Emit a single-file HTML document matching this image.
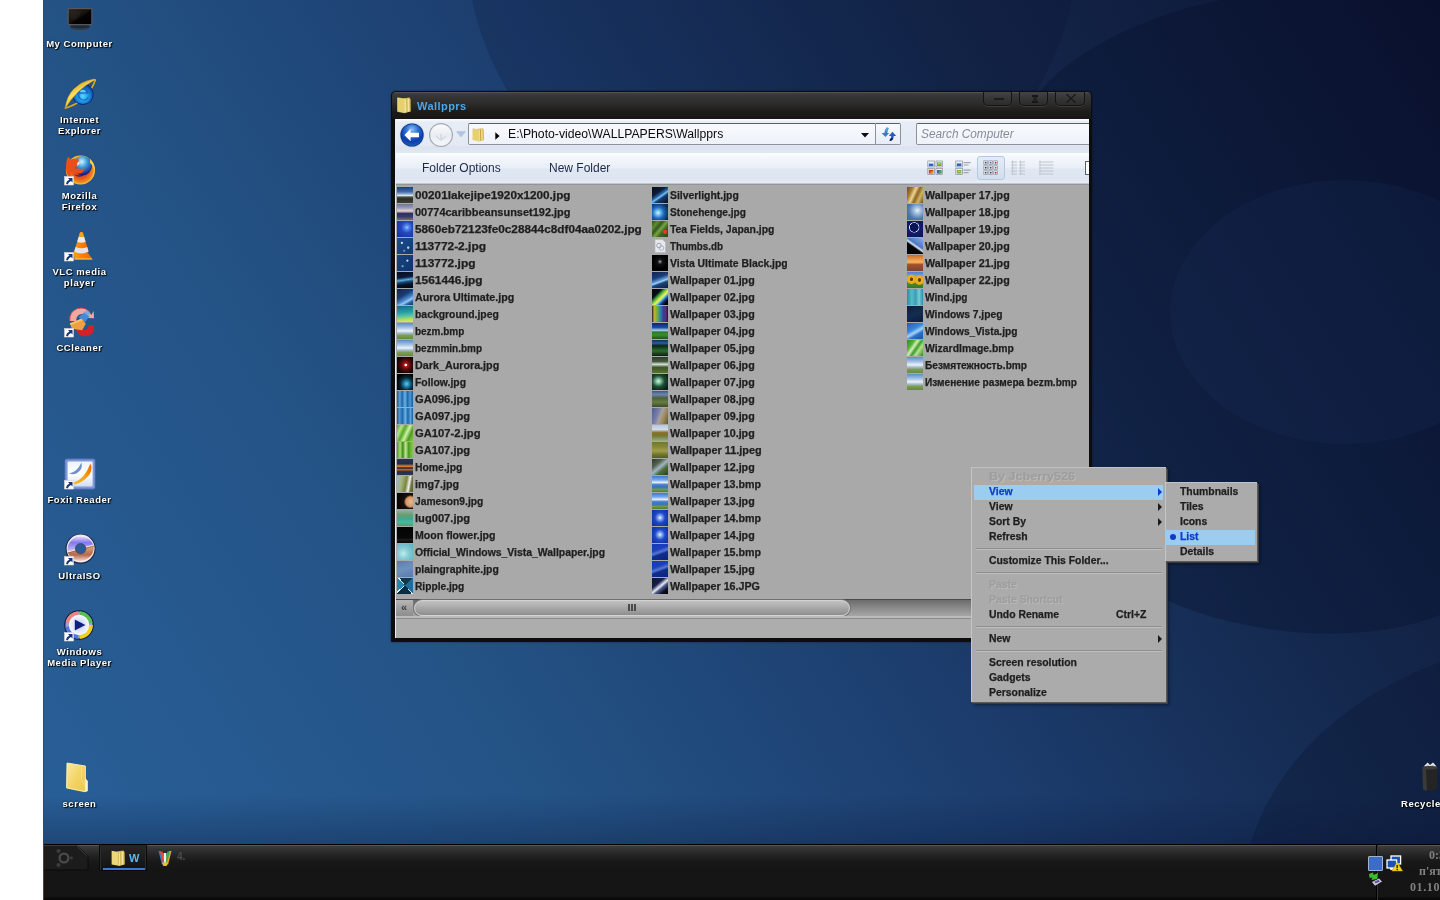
<!DOCTYPE html>
<html>
<head>
<meta charset="utf-8">
<title>Desktop</title>
<style>
html,body{margin:0;padding:0;}
body{width:1440px;height:900px;overflow:hidden;background:#fff;position:relative;font-family:"Liberation Sans",sans-serif;font-size:11px;font-weight:bold;}
#desk{will-change:transform;position:absolute;left:0;top:0;width:1440px;height:845px;overflow:hidden;background:#26598d;}
#white{position:absolute;left:0;top:0;width:43px;height:900px;background:#fff;z-index:50;}
#desk svg.wp{position:absolute;left:0;top:0;}
#edge{z-index:51;position:absolute;left:43px;top:0;width:1px;height:900px;background:#2a4a72;}
/* desktop icons */
.di{position:absolute;width:91px;height:70px;text-align:center;color:#fff;font-size:9.5px;line-height:11px;letter-spacing:.55px;font-weight:bold;text-shadow:1px 1px 1px #000,0 0 2px rgba(0,0,0,.8);}
.di .ic{position:absolute;left:30px;top:0;width:32px;height:32px;}
.di .lb{position:absolute;left:0;width:91px;top:36px;white-space:nowrap;}
.sc{position:absolute;left:-1px;top:19px;width:9px;height:9px;background:#fff;border:1px solid #9aa;box-sizing:border-box;}
.sc:after{content:"";position:absolute;left:2px;top:1px;width:4px;height:4px;background:#1d4fa8;}
/* window */
#win{position:absolute;left:391px;top:91px;width:701px;height:551px;border-radius:5px 5px 1px 1px;background:#0d0d0d;box-shadow:0 0 2px rgba(5,10,30,.6);}
#tbar{position:absolute;left:1px;top:1px;right:1px;height:27px;border-radius:4px 4px 0 0;background:linear-gradient(#626262 0,#404040 1px,#383838 3px,#2b2b2b 12px,#1d1b1a 20px,#181615 100%);}
#ttl{position:absolute;left:26px;top:9px;color:#4ca6ec;font-size:11px;line-height:13px;font-weight:bold;letter-spacing:.45px;}
.wb{position:absolute;top:1px;height:14px;border:1px solid #141414;border-top:none;border-radius:0 0 5px 5px;box-sizing:border-box;background:linear-gradient(#444 0,#363636 50%,#2c2c2c 100%);box-shadow:0 1px 0 #3c3c3c;}
.wb i{position:absolute;background:#171717;}
#client{position:absolute;left:4px;top:28px;width:694px;height:519px;background:#a9a9a9;overflow:hidden;border-left:1px solid #e8ecf0;box-sizing:border-box;}
#nav{position:absolute;left:0;top:0;width:694px;height:34px;background:linear-gradient(#fdfdfe 0,#e6edf6 3px,#e3eaf4 26px,#dbe3ee 28px,#e0e8f2 100%);}
#addr{position:absolute;left:72px;top:4px;width:408px;height:22px;box-sizing:border-box;border:1px solid #8c929c;border-top-color:#5c6068;border-radius:2px 0 0 2px;background:linear-gradient(#f8fafd,#eef2f9);}
#path{transform:scaleX(1.017);position:absolute;left:39px;top:3px;font-size:12px;line-height:15px;font-weight:normal;color:#0a0a0a;white-space:nowrap;transform-origin:0 50%;display:inline-block;}
#refr{position:absolute;left:480px;top:4px;width:25px;height:22px;box-sizing:border-box;border:1px solid #8c929c;border-top-color:#5c6068;border-left:none;border-radius:0 2px 2px 0;background:linear-gradient(#f8fafd,#e6ecf6);}
#srch{position:absolute;left:520px;top:4px;width:190px;height:22px;box-sizing:border-box;border:1px solid #8c929c;border-top-color:#5c6068;border-radius:2px;background:linear-gradient(#f8fafd,#eef2f9);}
#srch span{transform:scaleX(.985);position:absolute;left:4px;top:3px;font-size:12px;line-height:15px;font-style:italic;font-weight:normal;color:#868c96;white-space:nowrap;transform-origin:0 50%;display:inline-block;}
#tool{position:absolute;left:0;top:34px;width:694px;height:32px;background:linear-gradient(#fbfcfe 0,#f2f6fb 6px,#e9eff7 15px,#dfe7f2 16px,#dde6f1 26px,#e6edf6 30px,#9aa0a8 31px,#888 100%);}
#tool span{position:absolute;top:8px;font-size:12px;line-height:15px;font-weight:normal;color:#1c2846;white-space:nowrap;}
#tool>svg,#tool>div{margin-top:-1px;}
#list{position:absolute;left:0;top:66px;width:694px;height:415px;background:#a9a9a9;}
.th{position:absolute;width:16px;height:16px;margin-left:-396px;margin-top:-185px;}
.fn{-webkit-text-stroke:.25px #222;position:absolute;margin-left:-396px;margin-top:-185px;height:16px;line-height:17px;font-size:10px;font-weight:bold;color:#1e1e1e;white-space:nowrap;transform-origin:0 50%;display:inline-block;}
#hs{position:absolute;left:0;top:480px;width:694px;height:17px;background:linear-gradient(#4a4a4a 0,#4a4a4a 1px,#6c6c6c 1px,#8a8a8a 9px,#a6a6a6 17px);}
#hs:before{content:'';position:absolute;left:0;top:1px;width:17px;height:16px;background:linear-gradient(#b6b6b6,#9c9c9c 60%,#8e8e8e);}
#thumb{position:absolute;left:18px;top:1px;width:436px;height:16px;box-sizing:border-box;border:1px solid #d2d2d2;border-radius:8px;background:linear-gradient(#c2c2c2 0,#aaa 45%,#8e8e8e 100%);box-shadow:0 0 0 1px #6e6e6e;}
#thumb i{position:absolute;left:213px;top:3px;width:8px;height:7px;background:linear-gradient(90deg,#4a4a4a 0,#4a4a4a 2px,transparent 2px,transparent 3px,#4a4a4a 3px,#4a4a4a 5px,transparent 5px,transparent 6px,#4a4a4a 6px);}
#stat{position:absolute;left:0;top:497px;width:694px;height:22px;background:linear-gradient(#bcbcbc 0,#bababa 2px,#8c8c8c 2px,#8c8c8c 3px,#adadad 3px,#adadad 100%);}
/* menus */
#cm{position:absolute;left:971px;top:467px;width:195px;height:235px;background:#ababab;border-left:1px solid #c6c6c6;border-top:1px solid #c2c2c2;box-sizing:border-box;box-shadow:1px 1px 0 #5a5a5a,2px 2px 0 #3c3c3c,3px 3px 3px rgba(0,0,0,.45);}
#sm{position:absolute;left:1165px;top:482px;width:92px;height:79px;background:#ababab;border-left:1px solid #c6c6c6;border-top:1px solid #c2c2c2;box-sizing:border-box;box-shadow:1px 1px 0 #5a5a5a,2px 2px 0 #3c3c3c,3px 3px 3px rgba(0,0,0,.45);}
.mi{position:absolute;left:2px;right:3px;height:15px;margin-top:-1px;}
.mi span{-webkit-text-stroke:.25px currentColor;position:absolute;left:15px;top:0;font-size:10px;line-height:16px;font-weight:bold;color:#1e1e1e;white-space:nowrap;display:inline-block;transform-origin:0 50%;}
#sm .mi span{left:15px;}
#sm .mi{left:-1px;right:2px;}
.mi span.kb{left:142px;}
.mi.hl{background:#9bcdf0;margin-top:0;}
.mi.hl span{top:-1px;}
.mi.hl b{top:3px;}
.mi.hl u{top:4px;}
.mi.hl span{color:#0b3ccc;}
.mi.dis span{color:#9e9e9e;text-shadow:1px 1px 0 #bcbcbc;}
.mi b{position:absolute;right:1px;top:4px;width:0;height:0;border-left:4px solid #1a1a1a;border-top:4px solid transparent;border-bottom:4px solid transparent;}
.mi.hl b{border-left-color:#0b3ccc;}
.mi u{position:absolute;left:5px;top:5px;width:6px;height:6px;border-radius:3px;background:#0b3ccc;}
.sep{position:absolute;left:4px;right:4px;height:2px;margin-top:-1px;background:linear-gradient(#8e8e8e 0,#8e8e8e 1px,#bdbdbd 1px);}
/* taskbar */
#tb{will-change:transform;position:absolute;left:43px;top:844px;width:1397px;height:56px;overflow:hidden;background:linear-gradient(#000 0,#000 1px,#6e6e6e 1px,#3d3b3b 2px,#343333 5px,#222 12px,#181818 18px,#151515 26px,#141414 53px,#090909 54px,#090909 100%);}
#start{position:absolute;left:0;top:1px;width:46px;height:26px;}
#t1{position:absolute;left:56px;top:1px;width:48px;height:26px;box-sizing:border-box;border:1px solid #090909;border-top:none;background:linear-gradient(#262626,#121212);box-shadow:inset 1px 0 0 #2c2c2c,inset -1px 0 0 #2c2c2c;}
#t1 span{position:absolute;left:29px;top:7px;font-size:11px;line-height:13px;color:#58b8f8;font-weight:bold;}
#t1 i{position:absolute;left:3px;top:23px;width:42px;height:2px;background:#3a78d8;}
#t2{position:absolute;left:134px;top:7px;font-size:10px;line-height:12px;color:#4c4c4c;font-weight:bold;}
#tsep{position:absolute;left:1333px;top:1px;width:2px;height:55px;background:linear-gradient(90deg,#000 0,#000 1px,#343434 1px);}
#clk span{position:absolute;font-family:"Liberation Serif",serif;font-weight:bold;font-size:12px;line-height:14px;color:#808080;white-space:nowrap;}
</style>
</head>
<body>
<div id="desk">
<svg class="wp" width="1440" height="845" viewBox="0 0 1440 845">
<defs>
<linearGradient id="wg" gradientUnits="userSpaceOnUse" x1="100" y1="845" x2="1440" y2="0">
<stop offset="0" stop-color="#285e96"/>
<stop offset="0.25" stop-color="#245386"/>
<stop offset="0.5" stop-color="#1c3d6e"/>
<stop offset="0.72" stop-color="#14284d"/>
<stop offset="1" stop-color="#0b1230"/>
</linearGradient>
<linearGradient id="vg" x1="0" y1="0" x2="0" y2="1"><stop offset="0" stop-color="#061030" stop-opacity="0"/><stop offset="1" stop-color="#061030" stop-opacity="0.3"/></linearGradient>
</defs>
<rect width="1440" height="845" fill="url(#wg)"/>
<rect y="795" width="1440" height="50" fill="url(#vg)"/>
<circle cx="772" cy="-65" r="307" fill="#08102c" opacity="0.2"/>
<path d="M1222 0 C1120 20 1050 70 1035 100 C960 250 1000 520 1167 600 C1230 630 1350 650 1440 615 L1440 0 Z" fill="#070d28" opacity="0.3"/>
<ellipse cx="1345" cy="312" rx="175" ry="132" fill="#22407a" opacity="0.12"/>
<path d="M1250 845 Q1290 720 1440 662 L1440 845 Z" fill="#0a1330" opacity="0.3"/>
</svg>
<svg width="0" height="0" style="position:absolute">
<defs>
<radialGradient id="ieg" cx="0.5" cy="0.6" r="0.6"><stop offset="0" stop-color="#5fd8ff"/><stop offset="0.45" stop-color="#1c9be6"/><stop offset="1" stop-color="#0d3a9c"/></radialGradient>
<linearGradient id="iey" x1="0" y1="1" x2="1" y2="0"><stop offset="0" stop-color="#e8b820"/><stop offset="0.5" stop-color="#ffe060"/><stop offset="1" stop-color="#c89a18"/></linearGradient>
<radialGradient id="ffg" cx="0.45" cy="0.3" r="0.7"><stop offset="0" stop-color="#d8f4ff"/><stop offset="0.4" stop-color="#3aa0e0"/><stop offset="1" stop-color="#141a78"/></radialGradient>
<radialGradient id="ffo" cx="0.5" cy="0.5" r="0.5"><stop offset="0.55" stop-color="#e8501a"/><stop offset="0.85" stop-color="#f08a1c"/><stop offset="1" stop-color="#f8c840"/></radialGradient>
<linearGradient id="vlc" x1="0" y1="0" x2="1" y2="0"><stop offset="0" stop-color="#f8a020"/><stop offset="0.5" stop-color="#ff7a00"/><stop offset="1" stop-color="#e86a00"/></linearGradient>
<linearGradient id="fold" x1="0" y1="0" x2="1" y2="1"><stop offset="0" stop-color="#fbeaa0"/><stop offset="0.5" stop-color="#f3d568"/><stop offset="1" stop-color="#eac848"/></linearGradient>
<radialGradient id="iso" cx="0.5" cy="0.5" r="0.5"><stop offset="0" stop-color="#fff"/><stop offset="1" stop-color="#f4e8f0"/></radialGradient>
<linearGradient id="isot" x1="0" y1="0" x2="0" y2="1"><stop offset="0" stop-color="#e8d8ff"/><stop offset="0.4" stop-color="#8078f0"/><stop offset="1" stop-color="#d8c8f8"/></linearGradient>
<linearGradient id="isob" x1="0" y1="0" x2="0" y2="1"><stop offset="0" stop-color="#e0b080"/><stop offset="0.6" stop-color="#b86848"/><stop offset="1" stop-color="#f0d8d0"/></linearGradient>
<radialGradient id="wmp" cx="0.5" cy="0.5" r="0.5"><stop offset="0" stop-color="#b8c8ff"/><stop offset="0.6" stop-color="#dfe8ff"/><stop offset="1" stop-color="#f8f8ff"/></radialGradient>
<linearGradient id="fox" x1="0" y1="0" x2="0" y2="1"><stop offset="0" stop-color="#eef3fb"/><stop offset="0.5" stop-color="#ffffff"/><stop offset="1" stop-color="#d4dcf4"/></linearGradient>
<linearGradient id="foxo" x1="0" y1="1" x2="1" y2="0"><stop offset="0" stop-color="#f0c020"/><stop offset="0.5" stop-color="#f8a010"/><stop offset="1" stop-color="#f06000"/></linearGradient>
<linearGradient id="mon" x1="0" y1="0" x2="1" y2="1"><stop offset="0" stop-color="#2a241e"/><stop offset="0.5" stop-color="#15100c"/><stop offset="0.55" stop-color="#050304"/><stop offset="1" stop-color="#000"/></linearGradient>
<g id="scarrow"><rect x="0.5" y="0.5" width="9" height="8.5" fill="#fff" stroke="#d0d4dc" stroke-width="0.6"/><path d="M4 1.9 L8.5 1.9 L8.5 6.4 L7 4.9 Q4.8 5.6 3.6 8.4 L2 7.8 Q2.4 4.6 5.5 3.4Z" fill="#15347e"/></g>
</defs>
</svg>
<div class="di" style="left:34px;top:2px"><svg class="ic" viewBox="0 0 32 32"><ellipse cx="16" cy="25.3" rx="10" ry="2.6" fill="#3a3d40"/><ellipse cx="16" cy="24.3" rx="10" ry="2.2" fill="#1c2a3c"/><rect x="3.6" y="6" width="24.8" height="17.2" rx="0.8" fill="#55565a"/><rect x="4.8" y="7.2" width="22.4" height="14.8" fill="url(#mon)"/><path d="M7 10h10M7 12h9M7 14h7M7 16h5" stroke="#3a3530" stroke-width="0.5"/></svg><div class="lb">My Computer</div></div>
<div class="di" style="left:34px;top:78px"><svg class="ic" viewBox="0 0 32 32"><g transform="translate(16.2 15.9) rotate(-43)"><path d="M-21 0 Q0 11 21 0" fill="none" stroke="#d8a818" stroke-width="1.6"/></g><circle cx="18.9" cy="16.2" r="10.7" fill="#0c2a7c"/><circle cx="18.9" cy="16.2" r="9.9" fill="url(#ieg)"/><path d="M13.4 17 A5.7 5.7 0 1 1 24.6 15.8 L15.8 15.8 A3.4 3.4 0 0 0 23.6 18.8 L24.6 20 A6.2 6.2 0 0 1 13.4 17Z" fill="#1458c0" opacity="0.7"/><path d="M15.8 14.2 L22 14.2 A3.2 3.2 0 0 0 15.8 14.2Z" fill="#58d0f8"/><g transform="translate(16.2 15.9) rotate(-43)"><path d="M-21.5 0.6 Q-2 -15.5 20 -1.6 Q22.6 0.4 20.4 2.4 Q21 0 17.6 -0.8 Q0 -5.6 -21.5 0.6Z" fill="url(#iey)" stroke="#b88810" stroke-width="0.4"/></g></svg><div class="lb">Internet<br>Explorer</div></div>
<div class="di" style="left:34px;top:154px"><svg class="ic" viewBox="0 0 32 32"><circle cx="16.5" cy="16" r="14.6" fill="url(#ffo)"/><circle cx="18.6" cy="11.6" r="9.6" fill="url(#ffg)"/><path d="M2.6 6.5 L4.2 2.8 L7 5.4 Q10 3.8 12.6 5.6 L14.4 3.6 L14.6 7.6 Q12.2 9.4 13.4 12 Q11 12.6 10.8 14.6 Q14 13.6 16.4 15.2 Q19 15 20.4 13.4 Q21 17.6 16.2 19.4 Q11 20.4 8.4 16.8 Q5 21 8 26 Q2 22 2 14 Q2 9.5 2.6 6.5Z" fill="#e8501a"/><path d="M14.4 7.8 Q12.4 9.4 13.4 12 Q15 10.6 15.8 9 Z" fill="#f8e8c8"/><path d="M26 5 Q31 10 30.5 17 Q29 11 26 9Z" fill="#f8d048"/><path d="M10 20 Q16 23 22 19 Q20 22.5 15 22.8 Q11.5 22.5 10 20Z" fill="#1a1c70" opacity="0.8"/></svg><svg style="position:absolute;left:30px;top:22px;width:10px;height:10px" viewBox="0 0 10 10"><use href="#scarrow"/></svg><div class="lb">Mozilla<br>Firefox</div></div>
<div class="di" style="left:34px;top:230px"><svg class="ic" viewBox="0 0 32 32"><path d="M9.6 21.5 L23 21.5 L28.6 29.6 L10.6 29.6Z" fill="url(#vlc)"/><path d="M10.6 28.2 L27.6 28.2 L28.6 29.6 L10.6 29.6Z" fill="#ffb840"/><path d="M16 2.6 Q17.4 1.4 18.8 2.6 L24.6 21.6 Q17.4 25.4 10.2 21.6Z" fill="url(#vlc)"/><path d="M14.7 6.8 L20.1 6.8 L21.6 11.8 Q17.4 13.6 13.2 11.8Z" fill="#eceaf0"/><path d="M11.6 17 Q17.4 19.6 23.2 17 L24.6 21.6 Q17.4 25.4 10.2 21.6Z" fill="#e4e2ea"/><path d="M16 2.6 Q17.4 1.4 18.8 2.6 L20 6.4 L14.8 6.4Z" fill="#e8a828"/></svg><svg style="position:absolute;left:30px;top:22px;width:10px;height:10px" viewBox="0 0 10 10"><use href="#scarrow"/></svg><div class="lb">VLC media<br>player</div></div>
<div class="di" style="left:34px;top:306px"><svg class="ic" viewBox="1.2 1.2 29.6 29.6"><path d="M26.6 9.4 Q22 1.2 13.6 3.6 Q5.8 6.4 6.6 15 L12.4 15 Q12.4 9.4 17.4 8.6 Q20.4 8.4 21.6 10.6 L20.2 12 L29 12.6 L28.6 5.8Z" fill="#f0a8a0"/><path d="M26.6 9.4 Q22 1.2 13.6 3.6 Q5.8 6.4 6.6 15" fill="none" stroke="#d04038" stroke-width="0.8"/><path d="M12 22 Q15 31.6 24.4 28.6 Q29.6 26.2 29 19.4 L24 18.6 Q23.6 23.6 19.4 23.4 Q17 23.4 15.6 21.4Z" fill="#d42028"/><path d="M14.6 11.6 L20.6 6.6 L24.6 11 L20.4 16.4Z" fill="#4888d8"/><path d="M19.6 7.4 L22.4 4.8 L25.4 7.6 L23.6 10.2Z" fill="#78a8e8"/><path d="M6.6 17.2 L17.4 13 L21.4 17.6 L18 23.6 L8.4 22.2Z" fill="#f0a040"/><path d="M6.6 17.2 L17.4 13 L18.6 14.4 L7.4 19Z" fill="#f8c060"/></svg><svg style="position:absolute;left:30px;top:22px;width:10px;height:10px" viewBox="0 0 10 10"><use href="#scarrow"/></svg><div class="lb">CCleaner</div></div>
<div class="di" style="left:34px;top:458px"><svg class="ic" viewBox="0 0 32 32"><rect x="0.6" y="0.6" width="30.8" height="30.8" rx="2.2" fill="#5674b8"/><rect x="1.4" y="1.4" width="29.2" height="29.2" rx="1.8" fill="#7f98d8"/><rect x="3.6" y="3.4" width="25" height="25.2" rx="1" fill="url(#fox)"/><path d="M5.2 15.4 Q13 14.6 17.4 4.6 Q19.4 11.6 12.4 15.4 Q8.6 17 5.2 15.4Z" fill="#7090cc"/><path d="M9.6 24.6 Q21 21 26.4 5.6 Q30.4 13.6 21.4 21 Q15.4 25.6 10.4 26.4Z" fill="url(#foxo)"/></svg><svg style="position:absolute;left:30px;top:22px;width:10px;height:10px" viewBox="0 0 10 10"><use href="#scarrow"/></svg><div class="lb">Foxit Reader</div></div>
<div class="di" style="left:34px;top:534px"><svg class="ic" viewBox="0 0 32 32"><circle cx="16.6" cy="14.8" r="15" fill="#141c38" opacity="0.85"/><circle cx="16.6" cy="14.6" r="14" fill="url(#iso)"/><path d="M3.6 18 A13.4 13.4 0 0 1 29.4 11.2 L16.6 14.6Z" fill="url(#isot)"/><path d="M29.6 11.4 A13.4 13.4 0 0 1 3.8 18.2 L16.6 14.6Z" fill="url(#isob)"/><path d="M3.4 18.2 L29.8 11.2" stroke="#f8ecd8" stroke-width="1.2"/><path d="M3.6 19 L29.9 12" stroke="#8a6040" stroke-width="0.8"/><circle cx="16.6" cy="14.6" r="5.6" fill="#40507a"/><circle cx="16.6" cy="14.6" r="4.2" fill="#2a5c98"/></svg><svg style="position:absolute;left:30px;top:22px;width:10px;height:10px" viewBox="0 0 10 10"><use href="#scarrow"/></svg><div class="lb">UltraISO</div></div>
<div class="di" style="left:34px;top:610px"><svg class="ic" viewBox="0 0 32 32"><circle cx="15" cy="15" r="14.8" fill="#101c48"/><circle cx="15" cy="15" r="13.6" fill="#98a4d0"/><path d="M15 15 L1.6 12 A13.8 13.8 0 0 1 14 1.2Z" fill="#f08078"/><path d="M15 15 L16 1.2 A13.8 13.8 0 0 1 28.6 13Z" fill="#58c050"/><path d="M15 15 L28.8 15 A13.8 13.8 0 0 1 16 28.8Z" fill="#f0d020"/><path d="M15 15 L14 28.8 A13.8 13.8 0 0 1 1.4 17Z" fill="#5078e0"/><circle cx="15" cy="15" r="10.2" fill="url(#wmp)"/><path d="M10.8 9.6 L21.4 15 L10.8 20.4Z" fill="#10207c"/></svg><svg style="position:absolute;left:30px;top:22px;width:10px;height:10px" viewBox="0 0 10 10"><use href="#scarrow"/></svg><div class="lb">Windows<br>Media Player</div></div>
<div class="di" style="left:34px;top:762px"><svg class="ic" viewBox="0 0 32 32"><path d="M3 1.4 L21 4.2 L21 16 L23.6 19 L23.6 29.2 L20.6 30.2 L2.6 26.4Z" fill="#c8a840"/><path d="M21 16 L23.8 19 L23.8 29 L20.8 30Z" fill="#f8f0c0"/><path d="M3 1 L21.4 4 L21.4 29.6 L2.6 25.8Z" fill="url(#fold)"/><path d="M3 1 L21.4 4 L21.4 29.6 L2.6 25.8Z" fill="none" stroke="#fbf0c0" stroke-width="0.9"/><path d="M17.6 5 L17.6 17 L21 24" fill="none" stroke="#f8e0a0" stroke-width="0.6"/></svg><div class="lb">screen</div></div>
<div class="di" style="left:1391px;top:762px"><svg class="ic" viewBox="0 0 32 32"><path d="M2.6 4.6 L6.6 0.6 L9 3 L12 0.4 L15.6 4.6Z" fill="#e8e8e8"/><path d="M4 4.8 L7 2.4 L9 4.4 L11.6 2.6 L14 4.8Z" fill="#b8b8b8"/><path d="M1.4 5.6 Q9 3.6 16.6 5.6 L16 27.6 Q9 30 2 27.6Z" fill="#242424"/><ellipse cx="9" cy="5.8" rx="7.6" ry="1.8" fill="#3c3c3c"/><path d="M1.4 5.6 L2 27.6 Q4 28.6 6 28.8 L5 6.6Z" fill="#3a3a3a"/></svg><div class="lb" style="text-align:left;left:10px">Recycle</div></div>

<div id="win">
 <div id="tbar"></div>
 <svg style="position:absolute;left:6px;top:6px" width="15" height="17" viewBox="0 0 15 17"><path d="M0.6 0.8 L7.6 2 L7.6 15.8 L0.6 14.4Z" fill="#e8d070"/><path d="M5.6 1.6 L12.4 0.6 L13.6 2.2 L13.8 14.6 L7.4 16 L7.4 2.4Z" fill="#d8b848"/><path d="M7.6 2.4 L12.2 1.4 L12.4 14.6 L7.6 15.8Z" fill="#f4e498"/><path d="M9.8 2 L10 15.2" stroke="#b89830" stroke-width="0.9"/><path d="M0.6 0.8 L7.6 2 L7.6 15.8 L0.6 14.4Z" fill="none" stroke="#f8eeb0" stroke-width="0.6"/></svg>
 <div id="ttl">Wallpprs</div>
 <div class="wb" style="left:592px;width:29px"><i style="left:10px;top:6px;width:10px;height:1.5px;opacity:.85"></i></div>
 <div class="wb" style="left:628px;width:29px"><i style="left:12px;top:3px;width:6px;height:2px"></i><i style="left:12px;top:9px;width:6px;height:2px"></i><i style="left:13px;top:5px;width:4px;height:4px;opacity:.6"></i></div>
 <div class="wb" style="left:664px;width:30px"><svg style="position:absolute;left:9px;top:1px" width="12" height="11" viewBox="0 0 12 11"><path d="M1.5 1.2 L10.5 9.8 M10.5 1.2 L1.5 9.8" stroke="#191919" stroke-width="1.3"/></svg></div>
 <div id="client">
  <div id="nav">
   <svg style="position:absolute;left:3px;top:3px" width="26" height="26" viewBox="0 0 26 26"><defs><radialGradient id="bk" cx="0.5" cy="0.25" r="0.8"><stop offset="0" stop-color="#8cc0f4"/><stop offset="0.35" stop-color="#2c70d8"/><stop offset="0.7" stop-color="#0c3ca8"/><stop offset="1" stop-color="#1c68d0"/></radialGradient></defs><circle cx="13" cy="13" r="12.3" fill="#c8d4e4"/><circle cx="13" cy="13" r="11.6" fill="#0c2c78"/><circle cx="13" cy="13" r="10.8" fill="url(#bk)"/><path d="M5.4 13 L11.6 6.8 L11.6 10.8 L20 10.8 L20 15.2 L11.6 15.2 L11.6 19.2Z" fill="#fff"/></svg>
   <svg style="position:absolute;left:32px;top:3px" width="26" height="26" viewBox="0 0 26 26"><defs><linearGradient id="fw" x1="0" y1="0" x2="0" y2="1"><stop offset="0" stop-color="#fafbfd"/><stop offset="0.5" stop-color="#e9edf3"/><stop offset="1" stop-color="#f4f6fa"/></linearGradient></defs><circle cx="13" cy="13" r="12" fill="#a4a8b0"/><circle cx="13" cy="13" r="10.8" fill="url(#fw)"/><path d="M8 14 L13 18 L18 14 M13 12 L13 17" stroke="#d4d8e0" stroke-width="1.6" fill="none"/></svg>
   <svg style="position:absolute;left:60px;top:12px" width="10" height="7" viewBox="0 0 10 7"><path d="M0.8 0.8 L9.2 0.8 L5 5.8Z" fill="#b4c8e0" stroke="#9cb0cc" stroke-width="0.6"/></svg>
   <div id="addr">
     <svg style="position:absolute;left:3px;top:3px" width="13" height="16" viewBox="0 0 15 17"><path d="M0.6 0.8 L7.6 2 L7.6 15.8 L0.6 14.4Z" fill="#e8d070"/><path d="M5.6 1.6 L12.4 0.6 L13.6 2.2 L13.8 14.6 L7.4 16 L7.4 2.4Z" fill="#d8b848"/><path d="M7.6 2.4 L12.2 1.4 L12.4 14.6 L7.6 15.8Z" fill="#f0dc88"/><path d="M9.8 2 L10 15.2" stroke="#b89830" stroke-width="0.9"/></svg>
     <svg style="position:absolute;left:26px;top:8px" width="5" height="8" viewBox="0 0 5 8"><path d="M0.3 0.3 L4.6 4 L0.3 7.7Z" fill="#000"/></svg>
     <span id="path">E:\Photo-video\WALLPAPERS\Wallpprs</span>
     <svg style="position:absolute;left:392px;top:9px" width="8" height="5" viewBox="0 0 8 5"><path d="M0 0 L8 0 L4 4.6Z" fill="#0a0a1a"/></svg>
   </div>
   <div id="refr"><svg style="position:absolute;left:0;top:-1px" width="25" height="22" viewBox="0 0 25 22"><path d="M10.8 4.6 L12.6 5 L11.2 10 L13.2 10 L9.4 14 L5.6 10 L8.4 10 Q8.6 6.6 10.8 4.6Z" fill="#3c78c8"/><path d="M10.8 4.6 L12.6 5 L11.6 8.4 L9.2 8.2 Q9.6 6 10.8 4.6Z" fill="#58a8c8"/><path d="M16.5 8.8 L20.2 13 L17.8 13 Q17.8 16.4 14.8 18 L13.4 17.2 Q15.4 15.6 15.2 13 L12.8 13Z" fill="#2c5cc0"/><path d="M14.8 18 L13.4 17.2 Q14.6 16.4 15 15 L17.2 15.4 Q16.4 17.2 14.8 18Z" fill="#10184c"/></svg></div>
   <div id="srch"><span>Search Computer</span></div>
  </div>
  <div id="tool">
   <span style="left:26px">Folder Options</span><span style="left:153px">New Folder</span>
   <svg style="position:absolute;left:531px;top:8px" width="17" height="16" viewBox="0 0 17 16"><g stroke="#8a8f9a" stroke-width="0.7"><rect x="0.8" y="1" width="6.6" height="6" fill="#eef2f8"/><rect x="9" y="1" width="6.6" height="6" fill="#eef2f8"/><rect x="0.8" y="8.6" width="6.6" height="6" fill="#eef2f8"/><rect x="9" y="8.6" width="6.6" height="6" fill="#eef2f8"/></g><rect x="1.8" y="3.6" width="4.6" height="2.6" fill="#2c68c0"/><rect x="10" y="2.4" width="4.6" height="3.6" fill="#6ca838"/><path d="M10.6 4.6 L12 3 L13 4.4 L14 3.4" stroke="#e8e040" stroke-width="0.8" fill="none"/><rect x="1.8" y="9.8" width="4.6" height="3.8" fill="#c8401c"/><rect x="3.6" y="11.4" width="2.4" height="2" fill="#e8a020"/><rect x="10" y="10" width="4.6" height="3.6" fill="#3c6c8c"/><rect x="12" y="10.4" width="2" height="2.8" fill="#54a048"/></svg>
<svg style="position:absolute;left:559px;top:8px" width="17" height="16" viewBox="0 0 17 16"><g stroke="#8a8f9a" stroke-width="0.7"><rect x="0.8" y="1" width="6.6" height="6" fill="#eef2f8"/><rect x="0.8" y="8.6" width="6.6" height="6" fill="#eef2f8"/></g><rect x="1.8" y="3.4" width="4.6" height="2.8" fill="#2c68c0"/><rect x="1.8" y="10" width="4.6" height="3.6" fill="#74ac3c"/><path d="M2.4 12.4 L4 10.8 L5 12.2 L6 11.2" stroke="#e8e040" stroke-width="0.8" fill="none"/><path d="M8.6 2.6 L15.6 2.6 M8.6 5 L13.6 5 M8.6 10.2 L15.6 10.2 M8.6 12.6 L13.6 12.6" stroke="#a0a6b2" stroke-width="1.2"/></svg>
<div style="position:absolute;left:581px;top:4px;width:28px;height:24px;box-sizing:border-box;border:1px solid #b4c8e0;border-radius:3px;background:linear-gradient(#e4ecf6,#d2deee)"></div>
<svg style="position:absolute;left:587px;top:8px" width="16" height="16" viewBox="0 0 16 16"><rect x="0.8" y="0.8" width="3.8" height="3.8" fill="#f4f6fa" stroke="#8a8f9a" stroke-width="0.7"/><rect x="1.9000000000000001" y="1.9000000000000001" width="1.6" height="1.6" fill="#445"/><rect x="5.8" y="0.8" width="3.8" height="3.8" fill="#f4f6fa" stroke="#8a8f9a" stroke-width="0.7"/><rect x="6.9" y="1.9000000000000001" width="1.6" height="1.6" fill="#2c68c0"/><rect x="10.8" y="0.8" width="3.8" height="3.8" fill="#f4f6fa" stroke="#8a8f9a" stroke-width="0.7"/><rect x="11.9" y="1.9000000000000001" width="1.6" height="1.6" fill="#b01c28"/><rect x="0.8" y="5.8" width="3.8" height="3.8" fill="#f4f6fa" stroke="#8a8f9a" stroke-width="0.7"/><rect x="1.9000000000000001" y="6.9" width="1.6" height="1.6" fill="#2c3c5c"/><rect x="5.8" y="5.8" width="3.8" height="3.8" fill="#f4f6fa" stroke="#8a8f9a" stroke-width="0.7"/><rect x="6.9" y="6.9" width="1.6" height="1.6" fill="#445"/><rect x="10.8" y="5.8" width="3.8" height="3.8" fill="#f4f6fa" stroke="#8a8f9a" stroke-width="0.7"/><rect x="11.9" y="6.9" width="1.6" height="1.6" fill="#6a7080"/><rect x="0.8" y="10.8" width="3.8" height="3.8" fill="#f4f6fa" stroke="#8a8f9a" stroke-width="0.7"/><rect x="1.9000000000000001" y="11.9" width="1.6" height="1.6" fill="#3c4454"/><rect x="5.8" y="10.8" width="3.8" height="3.8" fill="#f4f6fa" stroke="#8a8f9a" stroke-width="0.7"/><rect x="6.9" y="11.9" width="1.6" height="1.6" fill="#2c3c6c"/><rect x="10.8" y="10.8" width="3.8" height="3.8" fill="#f4f6fa" stroke="#8a8f9a" stroke-width="0.7"/><rect x="11.9" y="11.9" width="1.6" height="1.6" fill="#a8202c"/></svg>
<svg style="position:absolute;left:614px;top:8px" width="17" height="16" viewBox="0 0 17 16"><path d="M2.6 0.6 L2.6 15 M10.6 0.6 L10.6 15" stroke="#c4c8d0" stroke-width="1"/><path d="M1 2 L7 2 M1 5 L7 5 M1 8 L7 8 M1 11 L7 11 M1 14 L7 14 M9 2 L15 2 M9 5 L15 5 M9 8 L15 8 M9 11 L15 11 M9 14 L15 14" stroke="#c0c4cc" stroke-width="1"/></svg>
<svg style="position:absolute;left:642px;top:8px" width="17" height="16" viewBox="0 0 17 16"><path d="M2 0.6 L2 15" stroke="#c4c8d0" stroke-width="1"/><path d="M1 2 L15.4 2 M1 5 L15.4 5 M1 8 L15.4 8 M1 11 L15.4 11 M1 14 L15.4 14" stroke="#c0c4cc" stroke-width="1"/></svg>
<div style="position:absolute;left:689px;top:9px;width:10px;height:14px;box-sizing:border-box;border:1px solid #5a5e68;background:#fff"></div>
  </div>
  <div id="list">
<div class="th" style="left:397px;top:187px;background:linear-gradient(#1c3f7c 0,#3c6cac 30%,#a8c4dc 48%,#e4ecf0 54%,#4c5444 62%,#2a2e24 75%,#3c4034 100%)"></div>
<span class="fn" style="left:415px;top:187px;transform:scaleX(1.175)">00201lakejipe1920x1200.jpg</span>
<div class="th" style="left:397px;top:204px;background:linear-gradient(#6c7498 0,#9c9cb8 25%,#dcd0d0 42%,#b8a4a8 50%,#2c3060 58%,#343c70 80%,#806c74 100%)"></div>
<span class="fn" style="left:415px;top:204px;transform:scaleX(1.097)">00774caribbeansunset192.jpg</span>
<div class="th" style="left:397px;top:221px;background:radial-gradient(circle at 62% 40%,#a8c8ff 0,#5c88ec 14%,#2448c0 40%,#142c98 100%)"></div>
<span class="fn" style="left:415px;top:221px;transform:scaleX(1.179)">5860eb72123fe0c28844c8df04aa0202.jpg</span>
<div class="th" style="left:397px;top:238px;background:radial-gradient(circle at 30% 30%,#c8dcf0 0,#c8dcf0 5%,transparent 9%),radial-gradient(circle at 70% 60%,#a8c8e8 0,#a8c8e8 6%,transparent 11%),radial-gradient(circle at 45% 80%,#88b0dc 0,transparent 10%),linear-gradient(135deg,#1c4c8c,#123a74)"></div>
<span class="fn" style="left:415px;top:238px;transform:scaleX(1.193)">113772-2.jpg</span>
<div class="th" style="left:397px;top:255px;background:radial-gradient(circle at 65% 35%,#b8d0ec 0,#b8d0ec 5%,transparent 10%),radial-gradient(circle at 35% 70%,#98bce0 0,transparent 11%),linear-gradient(135deg,#18447f,#10346c)"></div>
<span class="fn" style="left:415px;top:255px;transform:scaleX(1.196)">113772.jpg</span>
<div class="th" style="left:397px;top:272px;background:linear-gradient(172deg,#060e20 0,#0c1c3c 35%,#58b0e0 50%,#1c4c7c 60%,#081428 75%,#04080f 100%)"></div>
<span class="fn" style="left:415px;top:272px;transform:scaleX(1.190)">1561446.jpg</span>
<div class="th" style="left:397px;top:289px;background:linear-gradient(150deg,#102448 0,#1c3c78 40%,#4c8cd0 62%,#9cc8f0 72%,#2c5ca0 84%,#183468 100%)"></div>
<span class="fn" style="left:415px;top:289px;transform:scaleX(1.070)">Aurora Ultimate.jpg</span>
<div class="th" style="left:397px;top:306px;background:linear-gradient(175deg,#146c88 0,#24a0a8 40%,#58c4a0 62%,#b8dc60 82%,#e8e070 100%)"></div>
<span class="fn" style="left:415px;top:306px;transform:scaleX(1.040)">background.jpeg</span>
<div class="th" style="left:397px;top:323px;background:linear-gradient(#5c8cc8 0,#a8c4e4 30%,#eef2f6 50%,#a8c0d8 62%,#7c9c54 78%,#688840 100%)"></div>
<span class="fn" style="left:415px;top:323px;transform:scaleX(0.996)">bezm.bmp</span>
<div class="th" style="left:397px;top:340px;background:linear-gradient(#5c8cc8 0,#a8c4e4 30%,#eef2f6 50%,#a8c0d8 62%,#7c9c54 78%,#688840 100%)"></div>
<span class="fn" style="left:415px;top:340px;transform:scaleX(0.997)">bezmmin.bmp</span>
<div class="th" style="left:397px;top:357px;background:radial-gradient(circle at 55% 50%,#fff 0,#fff 8%,#c01818 14%,#600c0c 35%,#1a0404 70%,#000 100%)"></div>
<span class="fn" style="left:415px;top:357px;transform:scaleX(1.075)">Dark_Aurora.jpg</span>
<div class="th" style="left:397px;top:374px;background:radial-gradient(ellipse at 60% 62%,#58d0f0 0,#1c7ca8 22%,#082838 45%,#000 75%)"></div>
<span class="fn" style="left:415px;top:374px;transform:scaleX(1.040)">Follow.jpg</span>
<div class="th" style="left:397px;top:391px;background:linear-gradient(90deg,#1c5c9c 0,#5aa4dc 18%,#1c64a8 32%,#6cb4e4 50%,#2068ac 66%,#4c98d4 82%,#1a5898 100%)"></div>
<span class="fn" style="left:415px;top:391px;transform:scaleX(1.114)">GA096.jpg</span>
<div class="th" style="left:397px;top:408px;background:linear-gradient(90deg,#1a5898 0,#4c98d4 16%,#2068ac 34%,#6cb4e4 52%,#1c64a8 68%,#5aa4dc 84%,#1c5c9c 100%)"></div>
<span class="fn" style="left:415px;top:408px;transform:scaleX(1.114)">GA097.jpg</span>
<div class="th" style="left:397px;top:425px;background:linear-gradient(115deg,#4c9c20 0,#b4e484 22%,#58a828 40%,#d0f0a8 58%,#4c9c20 76%,#88cc50 100%)"></div>
<span class="fn" style="left:415px;top:425px;transform:scaleX(1.123)">GA107-2.jpg</span>
<div class="th" style="left:397px;top:442px;background:linear-gradient(90deg,#4c9c20 0,#a8dc78 20%,#3c8c18 36%,#c0e898 54%,#4c9c20 72%,#88cc50 100%)"></div>
<span class="fn" style="left:415px;top:442px;transform:scaleX(1.114)">GA107.jpg</span>
<div class="th" style="left:397px;top:459px;background:linear-gradient(#283454 0,#202c4c 30%,#e88830 46%,#181c30 56%,#c06424 66%,#242c48 80%,#2c3858 100%)"></div>
<span class="fn" style="left:415px;top:459px;transform:scaleX(1.040)">Home.jpg</span>
<div class="th" style="left:397px;top:476px;background:linear-gradient(100deg,#9cb8d4 0,#a4b47c 30%,#7c8440 55%,#f0f0f0 72%,#70783c 84%,#585c30 100%)"></div>
<span class="fn" style="left:415px;top:476px;transform:scaleX(1.070)">img7.jpg</span>
<div class="th" style="left:397px;top:493px;background:radial-gradient(circle at 85% 55%,#e8b890 0,#d09868 30%,#1a100c 42%,#000 100%)"></div>
<span class="fn" style="left:415px;top:493px;transform:scaleX(1.023)">Jameson9.jpg</span>
<div class="th" style="left:397px;top:510px;background:linear-gradient(#8cb4a8 0,#6c9c6c 30%,#3ca890 55%,#48b8a4 75%,#5c9c70 100%)"></div>
<span class="fn" style="left:415px;top:510px;transform:scaleX(1.114)">lug007.jpg</span>
<div class="th" style="left:397px;top:527px;background:linear-gradient(#040404 0,#080808 70%,#1c1c20 78%,#060606 100%)"></div>
<span class="fn" style="left:415px;top:527px;transform:scaleX(1.058)">Moon flower.jpg</span>
<div class="th" style="left:397px;top:544px;background:radial-gradient(ellipse at 40% 60%,#c0ecec 0,#84ccd4 40%,#5cacc0 100%)"></div>
<span class="fn" style="left:415px;top:544px;transform:scaleX(1.040)">Official_Windows_Vista_Wallpaper.jpg</span>
<div class="th" style="left:397px;top:561px;background:linear-gradient(160deg,#5c7cac 0,#7090bc 50%,#5878a8 100%)"></div>
<span class="fn" style="left:415px;top:561px;transform:scaleX(1.040)">plaingraphite.jpg</span>
<div class="th" style="left:397px;top:578px;background:conic-gradient(from 45deg at 50% 45%,#1c6c9c 0 25%,#d8f0f8 25% 27%,#0c2c44 27% 50%,#e0f4fc 50% 52%,#2884b4 52% 75%,#d8f0f8 75% 77%,#103850 77% 100%)"></div>
<span class="fn" style="left:415px;top:578px;transform:scaleX(1.019)">Ripple.jpg</span>
<div class="th" style="left:652px;top:187px;background:linear-gradient(145deg,#060c18 0,#0c1c38 35%,#2c6cb8 50%,#7cc0f0 56%,#143c74 66%,#060c18 100%)"></div>
<span class="fn" style="left:670px;top:187px;transform:scaleX(1.040)">Silverlight.jpg</span>
<div class="th" style="left:652px;top:204px;background:radial-gradient(circle at 38% 55%,#e0f4ff 0,#6cc0f0 18%,#1c64b4 45%,#0c2c5c 80%,#081c40 100%)"></div>
<span class="fn" style="left:670px;top:204px;transform:scaleX(1.013)">Stonehenge.jpg</span>
<div class="th" style="left:652px;top:221px;background:radial-gradient(circle at 82% 68%,#e8382c 0,#e8382c 9%,transparent 14%),linear-gradient(130deg,#2c4c1c 0,#5c8c34 22%,#34581c 38%,#78a444 52%,#3c6424 68%,#2c4818 100%)"></div>
<span class="fn" style="left:670px;top:221px;transform:scaleX(1.040)">Tea Fields, Japan.jpg</span>
<div class="th" style="left:652px;top:238px;background:none"><svg width="16" height="16" viewBox="0 0 16 16"><path d="M3 1.5h7.5l3 3v10h-10.5z" fill="#e8e8ec" stroke="#b8bcc4" stroke-width="0.8"/><circle cx="7" cy="7.5" r="2.3" fill="none" stroke="#98a4b8" stroke-width="1"/><circle cx="9.5" cy="10" r="2.3" fill="none" stroke="#a8b4c8" stroke-width="1"/></svg></div>
<span class="fn" style="left:670px;top:238px;transform:scaleX(0.984)">Thumbs.db</span>
<div class="th" style="left:652px;top:255px;background:radial-gradient(circle at 50% 42%,#e8e8f0 0,#585860 8%,#101014 22%,#000 60%)"></div>
<span class="fn" style="left:670px;top:255px;transform:scaleX(1.040)">Vista Ultimate Black.jpg</span>
<div class="th" style="left:652px;top:272px;background:linear-gradient(160deg,#10244c 0,#1c3c78 35%,#5c9cd8 52%,#a8d0f0 58%,#1c4480 68%,#0c1c3c 100%)"></div>
<span class="fn" style="left:670px;top:272px;transform:scaleX(1.071)">Wallpaper 01.jpg</span>
<div class="th" style="left:652px;top:289px;background:linear-gradient(135deg,#04060c 0,#080c18 30%,#2c9c3c 40%,#c8e040 52%,#f0f068 58%,#48b8d8 66%,#1c3ca0 74%,#04060c 86%)"></div>
<span class="fn" style="left:670px;top:289px;transform:scaleX(1.071)">Wallpaper 02.jpg</span>
<div class="th" style="left:652px;top:306px;background:linear-gradient(90deg,#181c30 0,#c8b030 14%,#6cac48 34%,#2c7cb0 54%,#3c3c98 72%,#5c2c78 88%,#181428 100%)"></div>
<span class="fn" style="left:670px;top:306px;transform:scaleX(1.071)">Wallpaper 03.jpg</span>
<div class="th" style="left:652px;top:323px;background:linear-gradient(#0c2868 0,#1c4ca8 28%,#a8d0f0 46%,#2c7c24 56%,#3c8c2c 75%,#1c5418 100%)"></div>
<span class="fn" style="left:670px;top:323px;transform:scaleX(1.071)">Wallpaper 04.jpg</span>
<div class="th" style="left:652px;top:340px;background:linear-gradient(#102c5c 0,#2c5c9c 20%,#0c2414 36%,#1c5424 55%,#2c6c2c 68%,#0c1c10 100%)"></div>
<span class="fn" style="left:670px;top:340px;transform:scaleX(1.071)">Wallpaper 05.jpg</span>
<div class="th" style="left:652px;top:357px;background:linear-gradient(#2c3c30 0,#44583c 28%,#d8e4dc 46%,#8ca080 54%,#3c5428 66%,#58742c 100%)"></div>
<span class="fn" style="left:670px;top:357px;transform:scaleX(1.071)">Wallpaper 06.jpg</span>
<div class="th" style="left:652px;top:374px;background:radial-gradient(ellipse at 40% 45%,#e0f4e4 0,#7cc09c 18%,#1c4c34 45%,#0c2018 80%)"></div>
<span class="fn" style="left:670px;top:374px;transform:scaleX(1.071)">Wallpaper 07.jpg</span>
<div class="th" style="left:652px;top:391px;background:linear-gradient(#3c5890 0,#6c84ac 22%,#4c6038 45%,#687c40 70%,#384c2c 100%)"></div>
<span class="fn" style="left:670px;top:391px;transform:scaleX(1.071)">Wallpaper 08.jpg</span>
<div class="th" style="left:652px;top:408px;background:linear-gradient(110deg,#505c8c 0,#7880a8 35%,#a8a0a0 52%,#a08c58 70%,#605838 100%)"></div>
<span class="fn" style="left:670px;top:408px;transform:scaleX(1.071)">Wallpaper 09.jpg</span>
<div class="th" style="left:652px;top:425px;background:linear-gradient(#b4c8e0 0,#d0dcec 28%,#8c6c24 48%,#6c7c34 68%,#a0a888 100%)"></div>
<span class="fn" style="left:670px;top:425px;transform:scaleX(1.071)">Wallpaper 10.jpg</span>
<div class="th" style="left:652px;top:442px;background:linear-gradient(#6c7830 0,#8c8c34 35%,#a09c50 55%,#6c742c 80%,#505c24 100%)"></div>
<span class="fn" style="left:670px;top:442px;transform:scaleX(1.091)">Wallpaper 11.jpeg</span>
<div class="th" style="left:652px;top:459px;background:linear-gradient(140deg,#2c3830 0,#50604c 30%,#a4b4c4 50%,#4c6c38 68%,#2c4020 100%)"></div>
<span class="fn" style="left:670px;top:459px;transform:scaleX(1.071)">Wallpaper 12.jpg</span>
<div class="th" style="left:652px;top:476px;background:linear-gradient(#3c78d4 0,#78a8e8 25%,#e8f0f8 40%,#4880cc 54%,#3c70c0 70%,#6c9c48 84%,#507c34 100%)"></div>
<span class="fn" style="left:670px;top:476px;transform:scaleX(1.069)">Wallpaper 13.bmp</span>
<div class="th" style="left:652px;top:493px;background:linear-gradient(#3c78d4 0,#78a8e8 25%,#e8f0f8 40%,#4880cc 54%,#3c70c0 70%,#6c9c48 84%,#507c34 100%)"></div>
<span class="fn" style="left:670px;top:493px;transform:scaleX(1.071)">Wallpaper 13.jpg</span>
<div class="th" style="left:652px;top:510px;background:radial-gradient(ellipse at 50% 48%,#f0f4fc 0,#88a8ec 18%,#1c48c8 45%,#0c2c98 100%)"></div>
<span class="fn" style="left:670px;top:510px;transform:scaleX(1.069)">Wallpaper 14.bmp</span>
<div class="th" style="left:652px;top:527px;background:radial-gradient(ellipse at 50% 48%,#f0f4fc 0,#88a8ec 18%,#1c48c8 45%,#0c2c98 100%)"></div>
<span class="fn" style="left:670px;top:527px;transform:scaleX(1.071)">Wallpaper 14.jpg</span>
<div class="th" style="left:652px;top:544px;background:linear-gradient(160deg,#1838b8 0,#1c40c0 35%,#5478d0 50%,#102c90 62%,#0c2478 100%)"></div>
<span class="fn" style="left:670px;top:544px;transform:scaleX(1.069)">Wallpaper 15.bmp</span>
<div class="th" style="left:652px;top:561px;background:linear-gradient(160deg,#1838b8 0,#1c40c0 35%,#5478d0 50%,#102c90 62%,#0c2478 100%)"></div>
<span class="fn" style="left:670px;top:561px;transform:scaleX(1.071)">Wallpaper 15.jpg</span>
<div class="th" style="left:652px;top:578px;background:linear-gradient(140deg,#0c1430 0,#14204c 35%,#e8ecf4 52%,#4c5c8c 62%,#0c1024 80%,#000 100%)"></div>
<span class="fn" style="left:670px;top:578px;transform:scaleX(1.069)">Wallpaper 16.JPG</span>
<div class="th" style="left:907px;top:187px;background:linear-gradient(115deg,#6c4c14 0,#a47c2c 25%,#ecd494 42%,#8c6420 58%,#d4b468 76%,#6c4c14 100%)"></div>
<span class="fn" style="left:925px;top:187px;transform:scaleX(1.071)">Wallpaper 17.jpg</span>
<div class="th" style="left:907px;top:204px;background:radial-gradient(circle at 65% 40%,#e8f0f8 0,#a0bcdc 25%,#4c7cb0 60%,#3c6498 100%)"></div>
<span class="fn" style="left:925px;top:204px;transform:scaleX(1.071)">Wallpaper 18.jpg</span>
<div class="th" style="left:907px;top:221px;background:radial-gradient(circle at 45% 40%,#0c1458 0,#0c1458 32%,#e8ecfc 36%,#101c70 42%,#0c1450 100%)"></div>
<span class="fn" style="left:925px;top:221px;transform:scaleX(1.071)">Wallpaper 19.jpg</span>
<div class="th" style="left:907px;top:238px;background:linear-gradient(35deg,#000 0,#06080c 42%,#d8e4f4 50%,#4c78c0 60%,#8cb0e4 100%)"></div>
<span class="fn" style="left:925px;top:238px;transform:scaleX(1.071)">Wallpaper 20.jpg</span>
<div class="th" style="left:907px;top:255px;background:linear-gradient(#c46c34 0,#ec9c48 30%,#f4b860 45%,#a4502c 60%,#7c4434 100%)"></div>
<span class="fn" style="left:925px;top:255px;transform:scaleX(1.071)">Wallpaper 21.jpg</span>
<div class="th" style="left:907px;top:272px;background:radial-gradient(circle at 28% 45%,#6c3c0c 0,#6c3c0c 10%,#ecb41c 14%,#e8a818 30%,transparent 34%),radial-gradient(circle at 78% 50%,#6c3c0c 0,#6c3c0c 10%,#ecb41c 14%,#e8a818 30%,transparent 34%),linear-gradient(#4c84d0 0,#8cb4e4 40%,#4c8c2c 70%,#3c7424 100%)"></div>
<span class="fn" style="left:925px;top:272px;transform:scaleX(1.071)">Wallpaper 22.jpg</span>
<div class="th" style="left:907px;top:289px;background:linear-gradient(90deg,#2c8ca8 0,#58b8cc 30%,#3c9cb4 55%,#7cccd8 75%,#2c8ca8 100%)"></div>
<span class="fn" style="left:925px;top:289px;transform:scaleX(1.009)">Wind.jpg</span>
<div class="th" style="left:907px;top:306px;background:linear-gradient(160deg,#0c1c3c 0,#142c54 50%,#0c1c3c 100%)"></div>
<span class="fn" style="left:925px;top:306px;transform:scaleX(1.026)">Windows 7.jpeg</span>
<div class="th" style="left:907px;top:323px;background:linear-gradient(150deg,#1c5cb8 0,#3c88dc 40%,#a4d4f8 56%,#2c70c8 70%,#1c54a8 100%)"></div>
<span class="fn" style="left:925px;top:323px;transform:scaleX(1.017)">Windows_Vista.jpg</span>
<div class="th" style="left:907px;top:340px;background:linear-gradient(125deg,#2c8c20 0,#54b43c 28%,#d4f0b4 42%,#3c9c2c 56%,#b4e490 70%,#2c8420 100%)"></div>
<span class="fn" style="left:925px;top:340px;transform:scaleX(1.040)">WizardImage.bmp</span>
<div class="th" style="left:907px;top:357px;background:linear-gradient(#5c8cc8 0,#a8c4e4 30%,#eef2f6 50%,#a8c0d8 62%,#7c9c54 78%,#688840 100%)"></div>
<span class="fn" style="left:925px;top:357px;transform:scaleX(1.014)">Безмятежность.bmp</span>
<div class="th" style="left:907px;top:374px;background:linear-gradient(#5c8cc8 0,#a8c4e4 30%,#eef2f6 50%,#a8c0d8 62%,#7c9c54 78%,#688840 100%)"></div>
<span class="fn" style="left:925px;top:374px;transform:scaleX(1.011)">Изменение размера bezm.bmp</span>
  </div>
  <div id="hs">
   <span style="position:absolute;left:5px;top:1px;font-size:11px;color:#3c3c3c;font-weight:bold;line-height:14px">«</span>
   <div id="thumb"><i></i></div>
  </div>
  <div id="stat"></div>
 </div>
</div>

<div id="cm">
<div class="mi dis" style="top:2px"><span style="transform:scaleX(1.258)">By Jcberry526</span></div>
<div class="mi hl" style="top:17px"><span style="transform:scaleX(1.040)">View</span><b></b></div>
<div class="mi " style="top:32px"><span style="transform:scaleX(1.040)">View</span><b></b></div>
<div class="mi " style="top:47px"><span style="transform:scaleX(1.040)">Sort By</span><b></b></div>
<div class="mi " style="top:62px"><span style="transform:scaleX(1.040)">Refresh</span></div>
<div class="mi " style="top:86px"><span style="transform:scaleX(1.040)">Customize This Folder...</span></div>
<div class="mi dis" style="top:110px"><span style="transform:scaleX(1.040)">Paste</span></div>
<div class="mi dis" style="top:125px"><span style="transform:scaleX(1.040)">Paste Shortcut</span></div>
<div class="mi " style="top:140px"><span style="transform:scaleX(1.040)">Undo Rename</span><span class="kb" style="transform:scaleX(1.040)">Ctrl+Z</span></div>
<div class="mi " style="top:164px"><span style="transform:scaleX(1.040)">New</span><b></b></div>
<div class="mi " style="top:188px"><span style="transform:scaleX(1.040)">Screen resolution</span></div>
<div class="mi " style="top:203px"><span style="transform:scaleX(1.040)">Gadgets</span></div>
<div class="mi " style="top:218px"><span style="transform:scaleX(1.040)">Personalize</span></div>
<div class="sep" style="top:81px"></div>
<div class="sep" style="top:105px"></div>
<div class="sep" style="top:159px"></div>
<div class="sep" style="top:183px"></div>
</div>
<div id="sm">
<div class="mi " style="top:2px"><span style="transform:scaleX(1.040)">Thumbnails</span></div>
<div class="mi " style="top:17px"><span style="transform:scaleX(1.040)">Tiles</span></div>
<div class="mi " style="top:32px"><span style="transform:scaleX(1.040)">Icons</span></div>
<div class="mi hl" style="top:47px"><u></u><span style="transform:scaleX(1.040)">List</span></div>
<div class="mi " style="top:62px"><span style="transform:scaleX(1.040)">Details</span></div>
</div>
</div>
<div id="white"></div>
<div id="edge"></div>
<div id="tb">
<div id="start"><svg width="46" height="26" viewBox="0 0 46 26"><path d="M0 0 L33 0 L45 11 L45 25 L0 25Z" fill="#1c1c1c" stroke="#0a0a0a" stroke-width="1"/><path d="M0.5 0.5 L33 0.5 L44.5 11.2" fill="none" stroke="#3c3c3c" stroke-width="1"/><circle cx="21" cy="13" r="4.4" fill="none" stroke="#4a4a4a" stroke-width="2.4"/><circle cx="15.5" cy="6" r="2.1" fill="#3c3c3c"/><circle cx="15.5" cy="20" r="2.1" fill="#3c3c3c"/><circle cx="28.5" cy="13" r="1.4" fill="#3c3c3c"/></svg></div>
<div id="t1"><svg style="position:absolute;left:11px;top:5px" width="15" height="17" viewBox="0 0 15 17"><path d="M0.6 0.8 L7.6 2 L7.6 15.8 L0.6 14.4Z" fill="#ecd678"/><path d="M5.6 1.6 L12.4 0.6 L13.6 2.2 L13.8 14.6 L7.4 16 L7.4 2.4Z" fill="#d8b848"/><path d="M7.6 2.4 L12.2 1.4 L12.4 14.6 L7.6 15.8Z" fill="#f4e498"/><path d="M9.8 2 L10 15.2" stroke="#b89830" stroke-width="0.9"/></svg><span>W</span><i></i></div>
<svg style="position:absolute;left:114px;top:6px" width="16" height="17" viewBox="0 0 16 17"><path d="M1.5 1 L4 1 L7 13 L5 15Z" fill="#3c74c8"/><path d="M3 2 L5.6 1.4 L8.4 12 L6.6 14.4Z" fill="#e84830"/><path d="M14.5 1 L12 1 L9 13 L11 15Z" fill="#e8a020"/><path d="M13 2 L10.4 1.4 L7.6 12 L9.4 14.4Z" fill="#48a848"/><path d="M6.6 3 L9.4 3 L8.8 13 L7.2 13Z" fill="#f0f0f0"/><path d="M5 12.4 L11 12.4 L9.6 16 L6.4 16Z" fill="#e8c030"/></svg>
<span id="t2">4.</span>
<div id="tsep"></div>
<div style="position:absolute;left:1325px;top:12px;width:15px;height:15px;box-sizing:border-box;border:1px solid #a4b0cc;border-radius:1px;background:#3c6cc6"></div>
<svg style="position:absolute;left:1343px;top:11px" width="17" height="17" viewBox="0 0 17 17"><rect x="5" y="1" width="9.6" height="8" fill="#1c50b4" stroke="#fff" stroke-width="1.3"/><rect x="1" y="5" width="9.6" height="8" fill="#1c50b4" stroke="#fff" stroke-width="1.3"/><path d="M4 14 L8 14 M6 13 L6 15" stroke="#fff" stroke-width="1.4"/><path d="M11.2 7 L16.6 16 L5.8 16Z" fill="#f4d420" stroke="#b89000" stroke-width="0.5"/><path d="M11.2 10 L11.2 13.2 M11.2 14 L11.2 15.2" stroke="#2a2000" stroke-width="1.4"/></svg>
<svg style="position:absolute;left:1325px;top:28px" width="15" height="15" viewBox="0 0 15 15"><path d="M1 2 L5 0.6 L5.6 3 L10 1 L9 7 L3.4 8 L4.4 5.6 L1.6 6Z" fill="#38c028"/><path d="M4 10 L11 6.4 L14 9.4 L7 13.8Z" fill="#c8c8d0"/><path d="M6.4 9.8 L10.6 7.8 L11.8 9.4 L7.6 11.6Z" fill="#5850a0"/></svg>
<div id="clk"><span style="left:1386px;top:4px">0:35</span><span style="left:1376px;top:20px">п'ятниця</span><span style="left:1367px;top:36px;letter-spacing:.6px">01.10.2010</span></div>
</div>
</body>
</html>
